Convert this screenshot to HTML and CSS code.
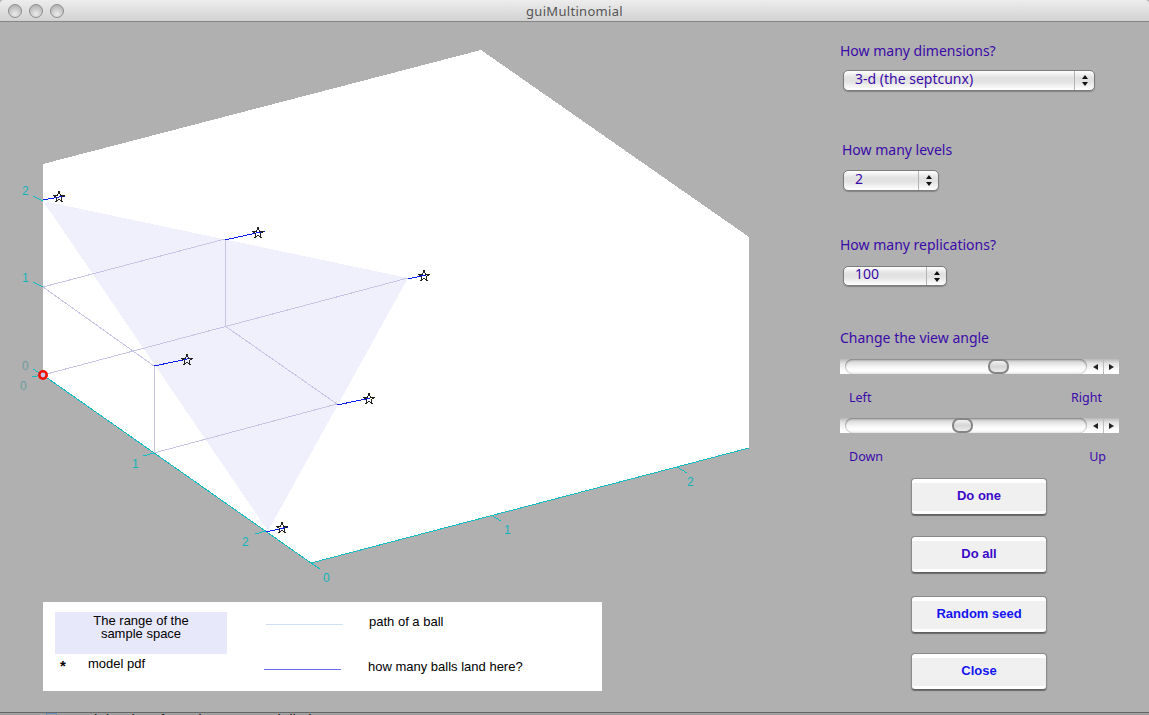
FILE: index.html
```html
<!DOCTYPE html>
<html lang="en">
<head>
<meta charset="utf-8">
<title>guiMultinomial</title>
<link rel="stylesheet" href="styles.css">
</head>
<body>
<div class="window">
  <header class="titlebar">
    <div class="lights"><span class="light"></span><span class="light"></span><span class="light"></span></div>
    <div class="title">guiMultinomial</div>
  </header>
  <main class="content">
    <section class="left">
      <svg class="plot" width="830" height="580" viewBox="0 22 830 580">
        <polygon class="wall" points="43,164 481,50 749,237 749,448 311,563 43,375"/>
        <polygon class="range" points="43,201 408,278 268,531"/>
        <g class="grid">
          <line x1="43" y1="287" x2="225" y2="239"/>
          <line x1="43" y1="287" x2="154" y2="366"/>
          <line x1="43" y1="375" x2="408" y2="278"/>
          <line x1="225" y1="240" x2="225" y2="326"/>
          <line x1="154" y1="366" x2="154" y2="453"/>
          <line x1="225" y1="326" x2="337" y2="404"/>
          <line x1="154" y1="453" x2="337" y2="404"/>
        </g>
        <g class="axis">
          <polyline points="43,375 311,563 749,448"/>
          <line x1="33" y1="196" x2="43" y2="201"/>
          <line x1="33" y1="282" x2="43" y2="287"/>
          <line x1="33" y1="369" x2="43" y2="375"/>
          <line x1="32" y1="377" x2="43" y2="375"/>
          <line x1="143" y1="456" x2="154" y2="453"/>
          <line x1="255" y1="534" x2="266" y2="531"/>
          <line x1="311" y1="563" x2="320" y2="569"/>
          <line x1="491" y1="515" x2="501" y2="521"/>
          <line x1="677" y1="467" x2="687" y2="473"/>
        </g>
        <g class="ticks">
          <text x="22" y="195">2</text>
          <text x="22" y="282">1</text>
          <text x="22" y="370" class="tick-grey">0</text>
          <text x="20" y="390" class="tick-grey">0</text>
          <text x="132" y="468">1</text>
          <text x="242" y="546">2</text>
          <text x="323" y="582">0</text>
          <text x="504" y="534">1</text>
          <text x="687" y="486">2</text>
        </g>
        <g class="paths">
          <line x1="43" y1="200" x2="65" y2="196"/>
          <line x1="225" y1="240" x2="265" y2="231"/>
          <line x1="408" y1="279" x2="430" y2="274"/>
          <line x1="154" y1="366" x2="192" y2="358"/>
          <line x1="337" y1="405" x2="375" y2="397"/>
          <line x1="266" y1="532" x2="288" y2="527"/>
        </g>
        <defs>
          <polygon id="star" points="0,-6 1.4,-1.7 5.2,-1.7 2.2,0.8 3.2,4.5 0,2.3 -3.2,4.5 -2.2,0.8 -5.2,-1.7 -1.4,-1.7"/>
        </defs>
        <g class="stars">
          <use href="#star" x="59" y="197"/>
          <use href="#star" x="258" y="233"/>
          <use href="#star" x="424" y="276"/>
          <use href="#star" x="187" y="360"/>
          <use href="#star" x="369" y="399"/>
          <use href="#star" x="282" y="528"/>
        </g>
        <circle class="origin" cx="43" cy="375" r="3.7"/>
      </svg>
      <div class="legend">
        <div class="legend-a">
          <div class="swatch">The range of the<br>sample space</div>
          <div class="pdf"><span class="pdf-star">*</span><span>model pdf</span></div>
        </div>
        <div class="legend-b">
          <div class="key key-first"><span class="rule rule-path"></span><span>path of a ball</span></div>
          <div class="key key-second"><span class="rule rule-land"></span><span>how many balls land here?</span></div>
        </div>
      </div>
    </section>
    <aside class="panel">
      <div class="label label-first">How many dimensions?</div>
      <div class="select select-wide"><span class="select-value">3-d (the septcunx)</span><span class="stepper"><i class="up"></i><i class="down"></i></span></div>
      <div class="label label-levels">How many levels</div>
      <div class="select select-small"><span class="select-value">2</span><span class="stepper"><i class="up"></i><i class="down"></i></span></div>
      <div class="label label-reps">How many replications?</div>
      <div class="select select-mid"><span class="select-value">100</span><span class="stepper"><i class="up"></i><i class="down"></i></span></div>
      <div class="label label-view">Change the view angle</div>
      <div class="slider slider-first">
        <div class="track"><span class="thumb" style="left:59%"></span></div>
        <span class="arrow"><i class="left-tri"></i></span><span class="arrow arrow-r"><i class="right-tri"></i></span>
      </div>
      <div class="ends ends-lr"><span>Left</span><span>Right</span></div>
      <div class="slider">
        <div class="track"><span class="thumb" style="left:44.2%"></span></div>
        <span class="arrow"><i class="left-tri"></i></span><span class="arrow arrow-r"><i class="right-tri"></i></span>
      </div>
      <div class="ends ends-du"><span>Down</span><span>Up</span></div>
      <div class="buttons">
        <button class="btn btn-violet">Do one</button>
        <button class="btn btn-violet">Do all</button>
        <button class="btn btn-blue">Random seed</button>
        <button class="btn btn-blue">Close</button>
      </div>
    </aside>
  </main>
  <footer class="behind"><span class="check"></span><span>Load the data from the comma delimit...</span></footer>
</div>
</body>
</html>
```
FILE: styles.css
```css
* { box-sizing: border-box; }
html, body { margin: 0; padding: 0; }
body {
  width: 1149px;
  height: 715px;
  overflow: hidden;
  background: #b0b0b0;
  font-family: "Liberation Sans", Arial, sans-serif;
}
.window { width: 1149px; height: 715px; display: flex; flex-direction: column; }

.titlebar {
  height: 22px;
  flex: none;
  display: flex;
  align-items: center;
  position: relative;
  background: linear-gradient(#ededed, #d2d2d2);
  border-bottom: 1px solid #868686;
  border-radius: 4px 4px 0 0;
}
.lights { display: flex; gap: 7px; padding-left: 8px; }
.light {
  width: 14px;
  height: 14px;
  border-radius: 50%;
  border: 1px solid #8d8d8d;
  background: radial-gradient(circle at 50% 75%, #ececec, #c2c2c2 60%, #a9a9a9);
}
.title {
  position: absolute;
  left: 0;
  right: 0;
  top: 3px;
  text-align: center;
  font-family: "Noto Sans", "Liberation Sans", sans-serif;
  font-size: 13px;
  letter-spacing: .3px;
  line-height: 16px;
  color: #555;
}

.content { flex: 1; display: flex; min-height: 0; }
.left { width: 830px; flex: none; }
.plot { display: block; shape-rendering: crispEdges; }
.wall { fill: #fff; }
.range { fill: #f0f0fc; }
.grid line { stroke: #c6c6e4; stroke-width: 1; }
.axis polyline, .axis line { stroke: #12bcc0; stroke-width: 1; fill: none; }
.ticks text { font-size: 12px; fill: #12b4b8; font-family: "Liberation Sans", Arial, sans-serif; }
.ticks .tick-grey { fill: #6f9a9c; }
.paths line { stroke: #0a1cf0; stroke-width: 1; }
.stars use { fill: none; stroke: #222; stroke-width: 1; }
.origin { fill: #c8c8e8; stroke: #f01000; stroke-width: 2.6; shape-rendering: auto; }

.legend {
  margin-left: 43px;
  width: 559px;
  height: 89px;
  background: #fff;
  display: flex;
  font-size: 13px;
  color: #000;
}
.legend-a { width: 212px; padding: 10px 0 0 3px; margin-left: 9px; flex: none; }
.swatch {
  width: 172px;
  height: 42px;
  padding-top: 2px;
  background: #e8e8fb;
  text-align: center;
  line-height: 13px;
}
.pdf { display: flex; margin-top: 2px; line-height: 16px; }
.pdf-star { width: 33px; padding-left: 5px; font-weight: bold; font-size: 15px; line-height: 20px; }
.legend-b { padding-top: 12px; }
.key { display: flex; align-items: center; line-height: 16px; }
.key-first { padding-left: 2px; }
.key-second { margin-top: 29px; }
.rule { display: block; width: 77px; height: 1px; }
.key-first .rule { margin: 4px 26px 0 0; }
.key-second .rule { margin: 4px 27px 0 0; }
.rule-path { background: #cfe0f5; }
.rule-land { background: #6a6af5; }

.panel {
  flex: 1;
  display: flex;
  flex-direction: column;
  align-items: flex-start;
  color: #3a0aa8;
  font-family: "Noto Sans", "Liberation Sans", sans-serif;
}
.label { font-size: 14px; line-height: 18px; height: 18px; padding-left: 10px; white-space: nowrap; }
.label-first { margin-top: 20px; }
.label-levels { margin-top: 50px; padding-left: 12px; }
.label-reps { margin-top: 45px; }
.label-view { margin-top: 43px; }

.select {
  margin-left: 13px;
  margin-top: 10px;
  height: 21px;
  display: flex;
  align-items: stretch;
  border: 1px solid #7c7c7c;
  border-radius: 5px;
  background: linear-gradient(#ffffff 0%, #e2e2e2 35%, #e2e2e2 55%, #ffffff 100%);
  box-shadow: 0 1px 1px rgba(0, 0, 0, .25);
  font-size: 14px;
  line-height: 15px;
}
.select-wide { width: 252px; }
.select-small { width: 96px; margin-top: 11px; }
.select-mid { width: 104px; margin-top: 12px; height: 20px; line-height: 13px; }
.select-value { flex: 1; padding-left: 11px; white-space: nowrap; }
.stepper {
  width: 20px;
  border-left: 1px solid #b4b4b4;
  display: flex;
  flex-direction: column;
  align-items: center;
  justify-content: center;
  gap: 3px;
}
.up, .down { display: block; width: 0; height: 0; border-left: 3px solid transparent; border-right: 3px solid transparent; }
.up { border-bottom: 4px solid #111; }
.down { border-top: 4px solid #111; }

.slider {
  margin-left: 10px;
  margin-top: 12px;
  width: 279px;
  height: 15px;
  display: flex;
  align-items: stretch;
  background: linear-gradient(#b8b8b8 0%, #e4e4e4 30%, #ffffff 80%);
}
.track {
  flex: 1;
  margin-left: 5px;
  position: relative;
  border-radius: 8px;
  background: linear-gradient(#bdbdbd 0%, #dddddd 22%, #f7f7f7 55%, #ffffff 75%, #f0f0f0 100%);
  box-shadow: inset 0 1px 2px rgba(0, 0, 0, .3), inset 1px 0 1px rgba(0, 0, 0, .15), inset -1px 0 1px rgba(0, 0, 0, .15);
}
.thumb {
  position: absolute;
  top: 0;
  width: 21px;
  height: 15px;
  border: 2px solid #858585;
  border-radius: 7px;
  background: linear-gradient(#f2f2f2, #d6d6d6 50%, #ececec);
}
.arrow { width: 16px; display: flex; align-items: center; justify-content: center; }
.arrow-r { border-left: 1px solid #bcbcbc; }
.left-tri, .right-tri { display: block; width: 0; height: 0; border-top: 3.5px solid transparent; border-bottom: 3.5px solid transparent; }
.left-tri { border-right: 5px solid #222; }
.right-tri { border-left: 5px solid #222; }

.ends {
  width: 280px;
  display: flex;
  justify-content: space-between;
  font-size: 12.5px;
  line-height: 16px;
  height: 16px;
  padding-left: 19px;
}
.ends-lr { margin-top: 16px; padding-right: 8px; }
.ends-du { margin-top: 16px; padding-right: 4px; }

.buttons { margin-left: 81px; margin-top: 13px; display: flex; flex-direction: column; }
.btn {
  width: 136px;
  height: 37px;
  padding: 0 0 2px;
  border: 1px solid #8a8a8a;
  border-bottom-color: #5f5f5f;
  border-radius: 4px;
  background: linear-gradient(#ffffff 0, #ffffff 10%, #f0f0f0 12%, #f0f0f0 90%, #ffffff 92%);
  box-shadow: 0 1px 1px rgba(0, 0, 0, .4);
  font-family: "Liberation Sans", Arial, sans-serif;
  font-weight: bold;
  font-size: 13px;
}
.btn + .btn { margin-top: 21px; }
.btn-violet { color: #3a0ac8; }
.btn-blue { color: #1414f0; }
.btn:nth-child(3) { margin-top: 23px; }
.btn:nth-child(4) { margin-top: 20px; }

.behind {
  flex: none;
  height: 3px;
  overflow: hidden;
  display: flex;
  gap: 7px;
  padding-left: 46px;
  background: #a0a0a0;
  border-top: 1px solid #666;
  font-size: 15px;
  line-height: 14px;
  color: #111;
}
.check { width: 11px; height: 11px; flex: none; border: 1px solid #6f8fb8; }
```
